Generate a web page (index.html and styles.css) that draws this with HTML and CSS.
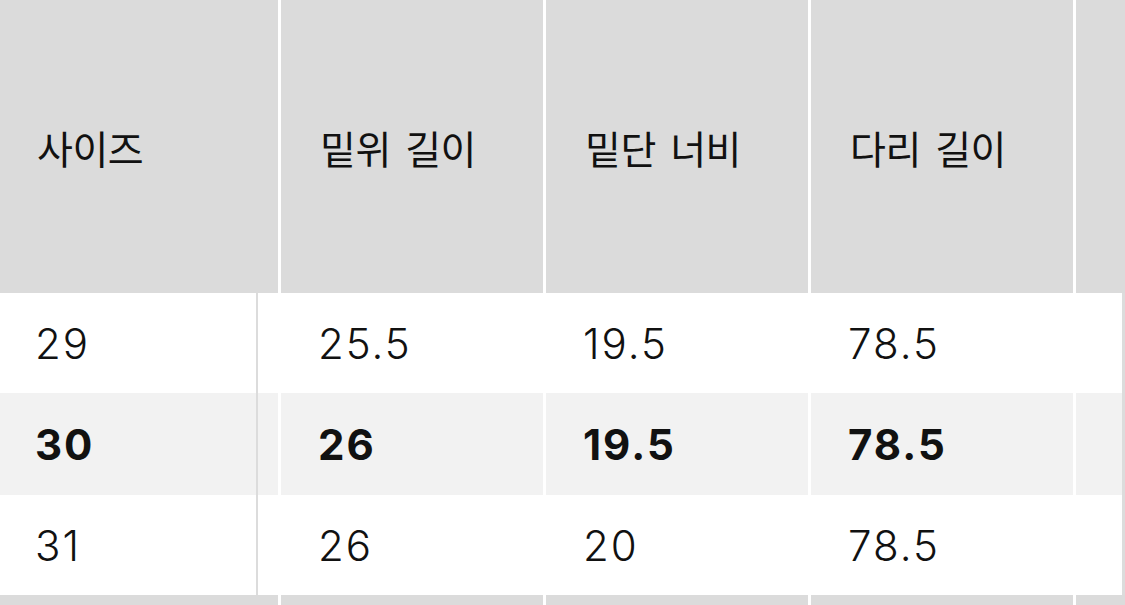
FILE: index.html
```html
<!DOCTYPE html>
<html lang="ko">
<head>
<meta charset="utf-8">
<link rel="stylesheet" href="styles.css">
</head>
<body>
<div class="wrap">
<table class="size">
<colgroup>
<col class="w1">
<col class="w2">
<col class="w2">
<col class="w2">
<col class="w2">
</colgroup>
<thead>
<tr class="head">
<th class="c1">사이즈</th>
<th>밑위 길이</th>
<th>밑단 너비</th>
<th>다리 길이</th>
<th class="c5"></th>
</tr>
</thead>
<tbody>
<tr class="r1">
<td class="c1">29</td>
<td>25.5</td>
<td>19.5</td>
<td>78.5</td>
<td class="c5"></td>
</tr>
<tr class="r2 hl">
<td class="c1">30</td>
<td>26</td>
<td>19.5</td>
<td>78.5</td>
<td class="c5"></td>
</tr>
<tr class="r3">
<td class="c1">31</td>
<td>26</td>
<td>20</td>
<td>78.5</td>
<td class="c5"></td>
</tr>
<tr class="foot">
<td class="c1"></td>
<td></td>
<td></td>
<td></td>
<td class="c5"></td>
</tr>
</tbody>
</table>
</div>
</body>
</html>
```

FILE: styles.css
```css
html, body {
  margin: 0;
  padding: 0;
  background: #ffffff;
}
body {
  width: 1125px;
  height: 605px;
  overflow: hidden;
  font-family: Inter, "Noto Sans CJK KR", sans-serif;
  color: #111111;
}
.wrap {
  width: 1125px;
  height: 605px;
  overflow: hidden;
}
.size {
  border-collapse: separate;
  border-spacing: 3px 0;
  margin-left: -3px;
  table-layout: fixed;
  width: 1344px;
}
.w1 { width: 278px; }
.w2 { width: 262px; }
.size th,
.size td {
  padding: 0 0 0 39px;
  text-align: left;
  vertical-align: middle;
  white-space: nowrap;
  box-sizing: border-box;
}
.size .c1 {
  padding-left: 37px;
}
.size td {
  padding-left: 37px;
}
.size td.c1 {
  padding-left: 35px;
}
.head th {
  background: #dbdbdb;
  height: 293px;
  font-family: "Noto Sans CJK KR", sans-serif;
  font-weight: 400;
  font-size: 39px;
  letter-spacing: -0.5px;
  word-spacing: 4px;
  padding-bottom: 2px;
  padding-top: 3px;
}
.size td {
  font-size: 42px;
  font-weight: 300;
  letter-spacing: 2px;
  height: 100px;
  background: #ffffff;
}
.r2 td {
  height: 102px;
  background: #f2f2f2;
  font-weight: 700;
  letter-spacing: 2px;
}
.r1 td, .r2 td, .r3 td {
  position: relative;
}
.r1 td.c1::after,
.r2 td.c1::after,
.r3 td.c1::after {
  content: "";
  position: absolute;
  top: 0;
  bottom: 0;
  left: 256px;
  width: 2px;
  background: #dcdcdc;
}
.r1 td.c5::after,
.r2 td.c5::after,
.r3 td.c5::after {
  content: "";
  position: absolute;
  top: 0;
  bottom: 0;
  left: 46px;
  width: 4px;
  background: #dcdcdc;
}
.foot td {
  height: 20px;
  background: #dbdbdb;
}
```
